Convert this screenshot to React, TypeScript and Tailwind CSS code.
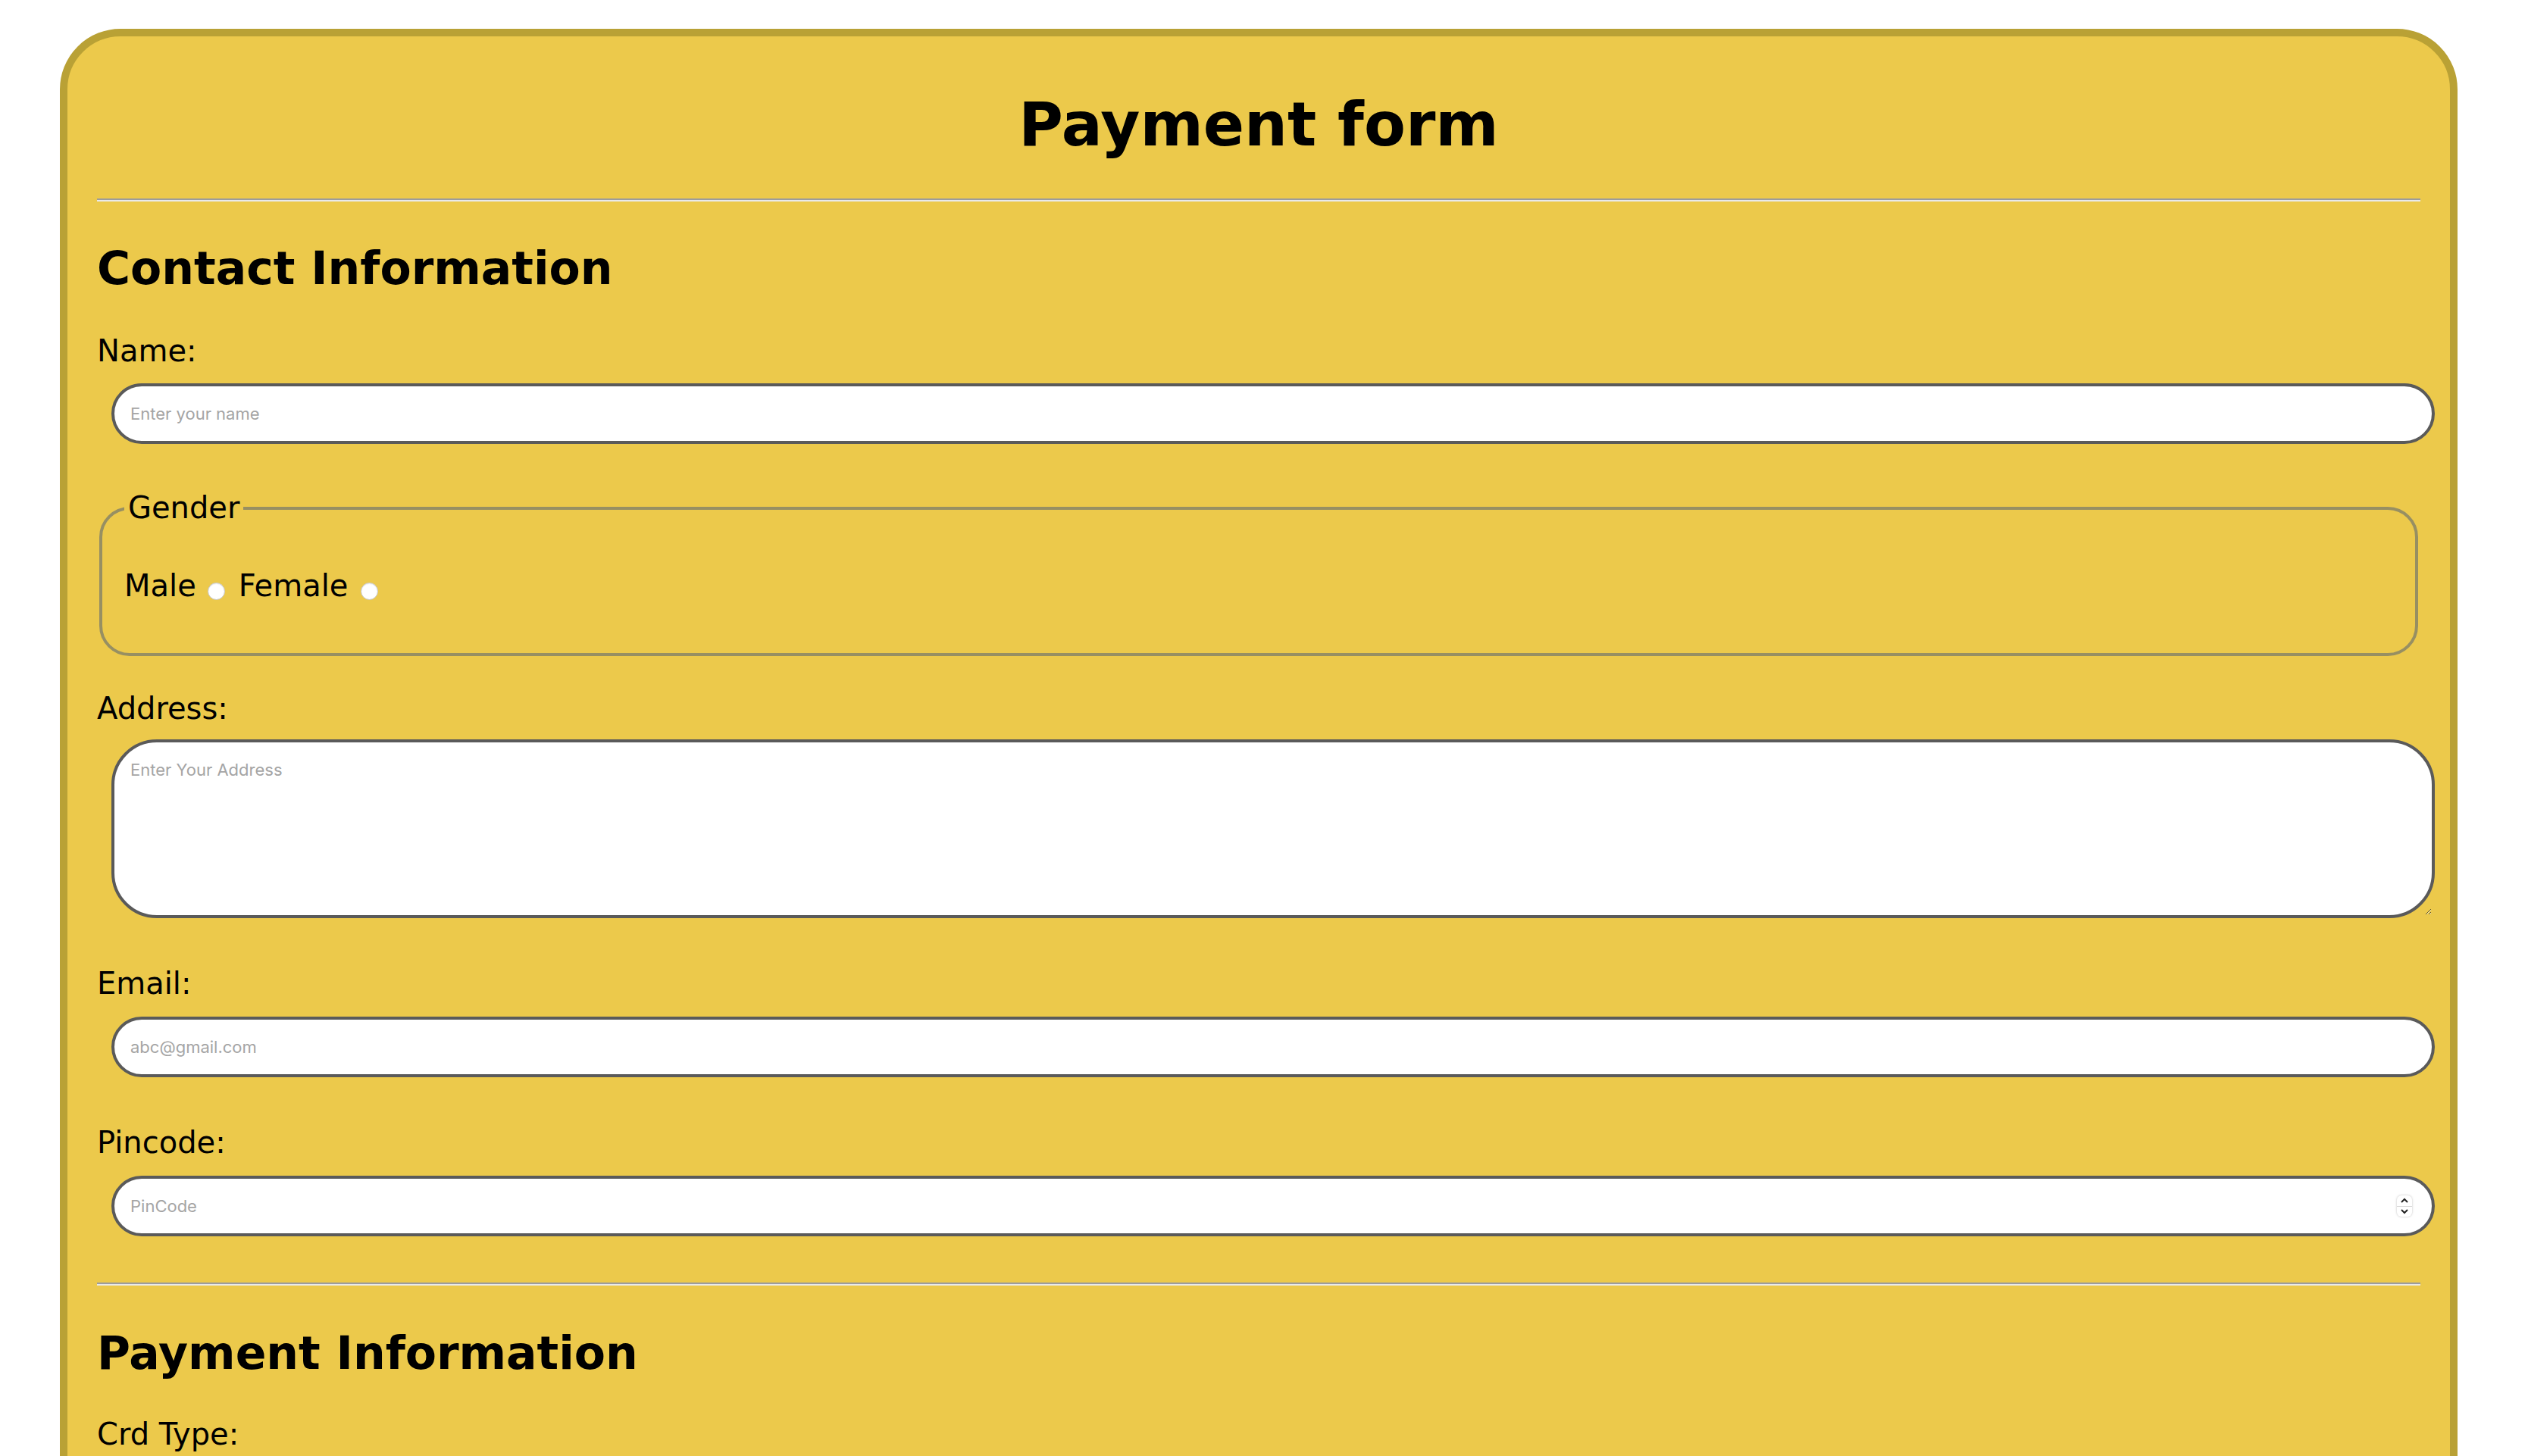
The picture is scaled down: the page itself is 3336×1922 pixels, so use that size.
import React from 'react';

const labelCls = "block text-[40px] leading-[47px] text-black";
const fieldCls =
  "block ml-[19px] w-full h-[80px] rounded-[60px] border-4 border-[#5a5a5a] bg-white pl-[21px] pr-[21px] text-[22px] text-black outline-none placeholder:text-[#a5a5a5] font-['Inter',sans-serif]";

const Divider: React.FC<{ className?: string }> = ({ className = '' }) => (
  <hr className={`h-0 border-0 border-t-2 border-t-[#9c9c9c] border-b-2 border-b-[#e9e9e9] ${className}`} />
);

const Spinner: React.FC = () => (
  <div className="absolute right-[30px] top-[26px] flex h-[28px] w-[20px] flex-col items-center justify-between rounded-[6px] bg-white py-[3px] shadow-[0_0_3px_rgba(0,0,0,0.25)]">
    <svg width="12" height="8" viewBox="0 0 12 8">
      <path d="M2 6 L6 2 L10 6" fill="none" stroke="#222" strokeWidth="2" />
    </svg>
    <div className="h-px w-full bg-[#d6d6d6]" />
    <svg width="12" height="8" viewBox="0 0 12 8">
      <path d="M2 2 L6 6 L10 2" fill="none" stroke="#222" strokeWidth="2" />
    </svg>
  </div>
);

export default function App() {
  return (
    <div className="min-h-screen bg-white pt-[38px] pb-[80px] font-['DejaVu_Sans',Verdana,sans-serif]">
      <form
        className="ml-[79px] w-[3164px] rounded-[80px] border-[10px] border-[#b9a135] bg-[#ecc94b] px-[39px] pt-[70px] pb-[80px]"
        onSubmit={(e) => e.preventDefault()}
      >
        <h1 className="text-center text-[80px] font-bold leading-[93px] text-black">Payment form</h1>
        <Divider className="mt-[51px]" />

        <h2 className="mt-[53px] text-[60px] font-bold leading-[70px] text-black">Contact Information</h2>

        <label className={`${labelCls} mt-[51px]`} htmlFor="name">Name:</label>
        <input id="name" type="text" placeholder="Enter your name" className={`${fieldCls} mt-[19px]`} />

        <fieldset className="mx-[3px] mt-[61px] rounded-[40px] border-4 border-[#978f62] pl-[29px] pr-[29px] pt-[56px] pb-[65px]">
          <legend className="px-[5px] text-[40px] leading-[47px] text-black">Gender</legend>
          <div className="flex items-start text-[40px] leading-[47px] text-black">
            <span>Male</span>
            <input
              type="radio"
              name="gender"
              value="male"
              className="ml-[15px] mt-[19px] h-[23px] w-[23px] appearance-none rounded-full border border-[#c6c6c6] bg-white shadow-[inset_0_1px_1px_rgba(0,0,0,0.08)]"
            />
            <span className="ml-[18px]">Female</span>
            <input
              type="radio"
              name="gender"
              value="female"
              className="ml-[17px] mt-[19px] h-[23px] w-[23px] appearance-none rounded-full border border-[#c6c6c6] bg-white shadow-[inset_0_1px_1px_rgba(0,0,0,0.08)]"
            />
          </div>
        </fieldset>

        <label className={`${labelCls} mt-[46px]`} htmlFor="address">Address:</label>
        <textarea
          id="address"
          placeholder="Enter Your Address"
          className="mt-[17px] ml-[19px] block h-[236px] w-full rounded-[60px] border-4 border-[#5a5a5a] bg-white px-[21px] pt-[23px] text-[22px] leading-[27px] outline-none placeholder:text-[#a5a5a5] font-['Inter',sans-serif]"
        />

        <label className={`${labelCls} mt-[63px]`} htmlFor="email">Email:</label>
        <input id="email" type="email" placeholder="abc@gmail.com" className={`${fieldCls} mt-[20px]`} />

        <label className={`${labelCls} mt-[63px]`} htmlFor="pincode">Pincode:</label>
        <div className="relative mt-[20px] ml-[19px] w-full">
          <input
            id="pincode"
            type="text"
            inputMode="numeric"
            placeholder="PinCode"
            className="block h-[80px] w-full rounded-[60px] border-4 border-[#5a5a5a] bg-white pl-[21px] pr-[60px] text-[22px] text-black outline-none placeholder:text-[#a5a5a5] font-['Inter',sans-serif]"
          />
          <Spinner />
        </div>

        <Divider className="mt-[61px]" />

        <h2 className="mt-[54px] text-[60px] font-bold leading-[70px] text-black">Payment Information</h2>

        <label className={`${labelCls} mt-[49px]`} htmlFor="cardtype">Crd Type:</label>
        <select
          id="cardtype"
          className="mt-[20px] ml-[19px] block h-[80px] w-full rounded-[60px] border-4 border-[#5a5a5a] bg-white px-[21px] text-[22px] font-['Inter',sans-serif]"
          defaultValue=""
        >
          <option value="" disabled>Select a card type</option>
          <option value="visa">Visa</option>
          <option value="rupay">RuPay</option>
          <option value="master">MasterCard</option>
        </select>

        <label className={`${labelCls} mt-[63px]`} htmlFor="cardno">Card Number:</label>
        <input id="cardno" type="text" placeholder="Enter Number" className={`${fieldCls} mt-[20px]`} />

        <label className={`${labelCls} mt-[63px]`} htmlFor="exp">Expiration Date:</label>
        <input id="exp" type="text" placeholder="MM/YY" className={`${fieldCls} mt-[20px]`} />

        <label className={`${labelCls} mt-[63px]`} htmlFor="cvv">CVV:</label>
        <input id="cvv" type="password" placeholder="CVV" className={`${fieldCls} mt-[20px]`} />

        <button
          type="submit"
          className="mt-[60px] ml-[19px] h-[80px] rounded-[40px] border-4 border-[#5a5a5a] bg-white px-[40px] text-[36px]"
        >
          Pay Now
        </button>
      </form>
    </div>
  );
}
